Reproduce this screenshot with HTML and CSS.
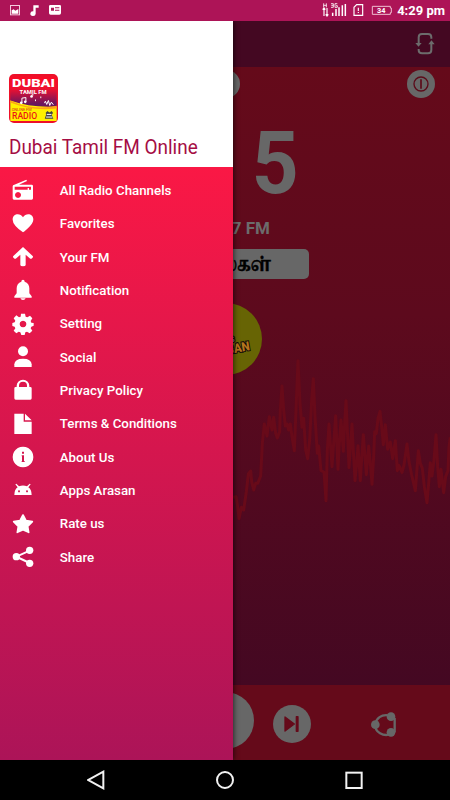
FILE: index.html
```html
<!DOCTYPE html>
<html lang="en">
<head>
<meta charset="utf-8">
<title>Dubai Tamil FM Online</title>
<link rel="stylesheet" href="styles.css">
</head>
<body>
<div class="phone">
  <header class="status">
    <svg class="status-left" viewBox="0 0 156 42">
      <rect x="1.5" y="7.500" width="27" height="28" fill="none" stroke="#f4cddd" stroke-width="3"/>
      <path d="M5 32v-10l6-3 5 4 9-5v14z" fill="#fff"/>
      <path d="M70 7h16v7h-9v18a8 7 0 1 1-7-7z" fill="#fff"/>
      <path fill-rule="evenodd" d="M121 6h28q4 0 4 4v20q0 5-5 5h-26q-5 0-5-5V10q0-4 4-4zM123 14v9h9v-9zM135 13v3h13v-3zM135 20v3h13v-3z" fill="#fff"/>
    </svg>
    <div class="status-right">
      <svg class="signal" viewBox="0 0 213 42" fill="none" stroke="#fff">
        <path d="M6 39V16M2 20l4-5 4 5M15 15v23M11 34l4 5 4-5" stroke-width="3.500"/>
        <path d="M5 1v12M13 1v12M5 7h8M27 2h7v11h-7M28 7h6M46 2h-7v11h7V8h-4" stroke-width="2.500"/>
        <path d="M32 39V29M42 39V18M51 39V13M61 39V7M70 39V3" stroke-width="4.500"/>
        <path d="M104 5h18v32H96V13z" stroke-width="3.500"/><path d="M109 14v10M109 27v3" stroke-width="3.500"/>
        <path d="M151 10h54v5h3v14h-3v5h-54z" stroke="#f0bfd2" stroke-width="3"/>
        <text class="battery" x="178" y="31">34</text>
      </svg>
      <span class="clock">4:29 pm</span>
    </div>
  </header>

  <div class="screen">
    <main class="app">
      <div class="toolbar">
        <svg class="refresh" viewBox="0 0 60 70" fill="none" stroke="#6c6c6c" stroke-width="6">
          <path d="M11 34V16q0-10 10-10h18q10 0 10 10v4M49 32v22q0 10-10 10H21q-10 0-10-9v-4"/>
          <path d="M1 33h19l-9.500 11zM40 37h19l-9.500-12z" fill="#6c6c6c" stroke="none"/>
        </svg>
      </div>
      <section class="player">
        <div class="controls">
          <span class="round"></span>
          <svg class="power" viewBox="0 0 84 84"><circle cx="42" cy="42" r="42" fill="#676767"/><circle cx="42" cy="42" r="21" fill="none" stroke="#5c0a19" stroke-width="4"/><path d="M42 28v28" stroke="#5c0a19" stroke-width="5"/></svg>
        </div>
        <div class="count"><span>5</span></div>
        <div class="freq">7 FM</div>
        <div class="category" lang="ta"><span>பாடல்கள்</span></div>
        <svg class="badge" viewBox="0 0 216 216">
          <circle cx="108" cy="108" r="108" fill="#676404"/>
          <g transform="rotate(-10 130 136)"><text x="174" y="117" text-anchor="end" class="badge-top" transform="translate(-36 0)">APPS</text><text x="179" y="150" text-anchor="end" class="badge-name" textLength="140" lengthAdjust="spacingAndGlyphs">ARASAN</text></g>
        </svg>
        <svg class="wave" viewBox="24 0 651 540"><path d="M24 442L33 440 38 470 42 506 49 472 56 480 64 425 70 372 77 363 80 395 86 420 92 400 98 400 107 378 112 280 118 222 126 258 133 200 141 240 146 202 152 250 157 264 164 245 166 180 171 108 176 180 181 228 186 222 191 240 196 222 201 260 208 302 213 180 219 32 225 160 231 232 236 205 242 300 248 326 254 270 260 150 265 86 270 200 277 310 281 288 288 362 297 366 303 452 307 300 312 222 321 350 326 280 332 197 339 358 343 280 348 210 355 304 359 220 363 152 368 260 372 353 377 280 381 222 386 320 390 392 395 340 399 287 406 392 411 310 415 254 424 374 431 288 436 340 441 403 446 320 449 245 454 250 459 205 465 184 470 230 475 284 481 224 488 298 496 276 503 326 511 272 517 362 522 346 531 367 537 345 546 282 552 335 560 375 571 422 575 370 580 302 586 340 592 355 598 410 606 458 611 400 616 338 621 378 627 330 633 254 638 350 643 410 648 358 656 428 662 380 669 362 672 290 676 262"/></svg>
      </section>
      <footer class="transport">
        <span class="play"></span>
        <svg class="next" viewBox="0 0 114 114"><circle cx="57" cy="57" r="57" fill="#676767"/><path d="M36 36l28 21-28 21zM70 35h5v44h-5z" fill="#650a1a" stroke="#650a1a" stroke-width="4" stroke-linejoin="round"/></svg>
        <svg class="circle-share" viewBox="0 0 78 78" fill="#676767"><path d="M57 11C30 5 15 20 13 37c-3 23 25 38 46 29M71 18v43" fill="none" stroke="#676767" stroke-width="7"/><circle cx="60" cy="14" r="13"/><circle cx="13" cy="38" r="13"/><circle cx="60" cy="61" r="13"/></svg>
      </footer>
    </main>

    <aside class="drawer">
      <div class="brand">
        <svg class="logo" viewBox="0 0 148 148">
          <defs><linearGradient id="sky" x1="0" y1="0" x2="0" y2="1"><stop offset="0" stop-color="#fb0b25"/><stop offset=".35" stop-color="#ee1030"/><stop offset=".8" stop-color="#69165e"/></linearGradient></defs>
          <rect width="148" height="148" rx="15" fill="#ee1029"/>
          <path d="M4 10h140v100H4z" fill="url(#sky)"/>
          <path d="M4 80q65 23 140 18v44H4z" fill="#fff000"/>
          <path d="M4 80q65 32 140 16v8Q70 113 4 86z" fill="#ffa418"/>
          <text x="74" y="38" textLength="130" lengthAdjust="spacingAndGlyphs" class="logo-city">DUBAI</text>
          <text x="73" y="60" textLength="82" lengthAdjust="spacingAndGlyphs" class="logo-fm">TAMIL FM</text>
          <path d="M39 87V73l12-2v13M69 68v-5h5M80 82v-5M96 73v-5M107 88l3-6 4 10 5-12 4 15 5-10 6 8" fill="none" stroke="#fff" stroke-width="3"/>
          <circle cx="37" cy="87" r="4" fill="#fff"/><circle cx="49" cy="84" r="4" fill="#fff"/><circle cx="68" cy="68" r="4" fill="#fff"/>
          <text x="8" y="113" textLength="60" lengthAdjust="spacingAndGlyphs" class="logo-online">ONLINE FM</text>
          <text x="9" y="137" textLength="76" lengthAdjust="spacingAndGlyphs" class="logo-radio">RADIO</text>
          <path d="M111 117l5-5 6 4 7-4 4 6-4 5 5 12h-26l4-12z" fill="#444"/><path d="M114 122h14M112 130h19" stroke="#fff" stroke-width="3"/>
        </svg>
        <h1>Dubai Tamil FM Online</h1>
      </div>
      <nav class="menu">
        <a class="item"><svg viewBox="0 0 66 66"><path fill-rule="evenodd" d="M7 17L43 2l2 4-24 11h38q4 0 4 4v37q0 4-4 4H6q-4 0-4-4V22q0-4 5-5zM8 23v9h39v-5h4v5h6v-9zM18 39a9 9 0 1 0 .1 0z"/></svg>All Radio Channels</a>
        <a class="item"><svg viewBox="0 0 66 66"><path d="M33 58Q2 36 2 20C2 1 25-1 33 13 41-1 64 1 64 20 64 36 33 58 33 58z"/></svg>Favorites</a>
        <a class="item"><svg viewBox="0 0 66 66"><path d="M33 3l29 27q3 3-2 7-3 3-7 0L41 26v31q0 4-8 4t-8-4V26L13 37q-4 3-7 0-5-4-2-7z"/></svg>Your FM</a>
        <a class="item"><svg viewBox="0 0 66 66"><path d="M33 2q5 0 5 6 14 5 14 20v15l7 9v4H7v-4l7-9V28Q14 13 28 8q0-6 5-6zM25 58h16q-2 5-8 5t-8-5z"/></svg>Notification</a>
        <a class="item"><svg viewBox="0 0 66 66"><path fill-rule="evenodd" d="M27 2h12l2 9 5 2 8-5 7 8-5 8 2 5 7 1v8l-7 3-2 5 5 7-8 8-8-5-5 2-2 8H28l-3-8-5-2-7 5-8-8 5-7-2-5-7-2v-9l7-2 2-5-5-7 8-9 8 6 5-2zM33 23a10 10 0 1 0 .1 0z"/></svg>Setting</a>
        <a class="item"><svg viewBox="0 0 66 66"><circle cx="33" cy="16" r="15"/><path d="M7 63V55Q8 38 33 38t26 17v8z"/></svg>Social</a>
        <a class="item"><svg viewBox="0 0 66 66"><path fill-rule="evenodd" d="M14 24v-4a19 18 0 0 1 38 0v4h3q4 0 4 4v30q0 4-4 4H11q-4 0-4-4V28q0-4 4-4zM21 24h24v-4a12 12 0 0 0-24 0z"/></svg>Privacy Policy</a>
        <a class="item"><svg viewBox="0 0 66 66"><path d="M7 2h28v24h24v37H7zM39 2l20 20H39z"/></svg>Terms &amp; Conditions</a>
        <a class="item"><svg viewBox="0 0 66 66"><path fill-rule="evenodd" d="M33 2a31 31 0 1 0 .1 0zM30 17h6v6h-6zM29 28h7v17h2v3h-9v-3h1V31h-1z"/></svg>About Us</a>
        <a class="item"><svg viewBox="0 0 66 66"><path fill-rule="evenodd" d="M10 16l3-2 8 8q12-5 24 0l8-8 3 2-7 9q10 7 10 23H7q0-16 10-23zM21 34a3 3 0 1 0 .1 0zM45 34a3 3 0 1 0 .1 0z"/></svg>Apps Arasan</a>
        <a class="item"><svg viewBox="0 0 66 66"><path d="M33 6l9 17 19 3-14 14 3 18-17-8-17 8 3-18L5 26l19-3z" stroke="#fff" stroke-width="5" stroke-linejoin="round"/></svg>Rate us</a>
        <a class="item"><svg viewBox="0 0 66 66"><path d="M53 14L13 32l40 19" fill="none" stroke="#fff" stroke-width="6"/><circle cx="53" cy="13" r="11"/><circle cx="13" cy="32" r="11"/><circle cx="53" cy="52" r="11"/></svg>Share</a>
      </nav>
    </aside>
  </div>

  <footer class="system">
    <svg viewBox="0 0 54 60"><path d="M49 5v50L4 30z"/></svg>
    <svg viewBox="0 0 54 60"><circle cx="27" cy="30" r="24"/></svg>
    <svg viewBox="0 0 54 60"><rect x="4" y="8" width="46" height="46"/></svg>
  </footer>
</div>
</body>
</html>
```

FILE: styles.css
```css
* { box-sizing: border-box; }
body { margin: 0; font-family: Roboto, "Liberation Sans", sans-serif; }
svg { display: block; flex: none; }
.phone { width: 450px; height: 800px; display: flex; flex-direction: column; overflow: hidden; }

.status { height: 21px; flex: none; background: #ad1457; display: flex; justify-content: space-between; padding: 0 5px 0 10px; }
.status-left { width: 52px; height: 14px; margin-top: 3px; }
.status-right { display: flex; }
.signal { width: 71px; height: 14px; margin: 3px 4px 0 0; }
.battery { font-size: 22px; font-weight: 700; fill: #fff; stroke: none; text-anchor: middle; }
.clock { color: #fff; font-size: 13px; font-weight: 700; line-height: 21px; white-space: nowrap; }

.screen { position: relative; height: 739px; flex: none; }
.app { height: 100%; display: flex; flex-direction: column; }
.toolbar { height: 46px; flex: none; background: #440822; display: flex; justify-content: flex-end; padding: 11px 15px 0 0; }
.refresh { width: 20px; height: 23.300px; }
.player { height: 618px; flex: none; display: flex; flex-direction: column; background: linear-gradient(#650a1a, #5d0a1d 40%, #440822); }
.controls { height: 34px; padding: 3px 15px 0 212px; display: flex; justify-content: space-between; }
.round, .power { width: 28px; height: 28px; }
.round { border-radius: 50%; background: #676767; }
.count { height: 115px; padding: 11px 0 0 250px; color: #676767; font-size: 88px; font-weight: 700; line-height: 102px; }
.count span { display: inline-block; transform: scaleX(.93); }
.freq { height: 33px; padding-right: 180px; color: #6c6c6c; font-size: 17px; font-weight: 700; line-height: 25px; text-align: right; white-space: pre; }
.category { width: 167px; height: 30px; margin-left: 142px; padding-right: 38px; border-radius: 5px; background: #676767; color: #000; font-family: "Noto Serif Tamil", "Noto Sans Tamil", "Lohit Tamil", serif; font-size: 19px; font-weight: 700; line-height: 34px; text-align: right; white-space: nowrap; }
.category span { display: inline-block; transform: scaleX(.8); transform-origin: right; -webkit-text-stroke: .5px #000; }
.badge { width: 72px; height: 72px; margin: 24px 0 0 190px; }
.badge-top, .badge-name { font-weight: 900; fill: #b4751c; stroke: #140b09; stroke-width: 6px; paint-order: stroke; }
.badge-top { font-size: 24px; fill: #777; }
.badge-name { font-size: 38px; }
.wave { width: 217px; height: 180px; margin: -25px 0 0 233px; fill: none; stroke: #680a19; stroke-width: 9; stroke-linejoin: round; }
.transport { height: 75px; flex: none; display: flex; background: #650a1a; padding-left: 197px; }
.play { width: 57px; height: 57px; margin-top: 7px; border-radius: 50%; background: #676767; }
.next { width: 38px; height: 38px; margin: 20px 0 0 19px; }
.circle-share { width: 26px; height: 26px; margin: 27px 0 0 60px; }

.drawer { position: absolute; top: 0; left: 0; width: 233px; height: 739px; display: flex; flex-direction: column; box-shadow: 1px 0 5px rgba(0, 0, 0, .6); clip-path: inset(0 -8px 0 0); }
.brand { height: 146px; flex: none; padding: 53px 0 0 9px; background: #fff; }
.logo { width: 49px; height: 49px; }
.logo text { font-family: Roboto, sans-serif; }
.logo-city { font-size: 34px; font-weight: 900; fill: #fff; text-anchor: middle; }
.logo-fm { font-size: 17px; font-weight: 700; fill: #fff; text-anchor: middle; }
.logo-online { font-size: 12px; fill: #d52020; }
.logo-radio { font-size: 27px; font-weight: 500; fill: #ed1515; }
h1 { margin: 12px 0 0; color: #a50d44; font-size: 20px; font-weight: 400; line-height: 24px; white-space: nowrap; transform: scaleX(.947); transform-origin: left; }
.menu { flex: 1; padding-top: 6.700px; background: linear-gradient(#fa1845, #ac1458); }
.item { height: 33.350px; display: flex; align-items: center; gap: 25.500px; padding-left: 12.300px; color: #fff; font-size: 13.300px; font-weight: 500; white-space: nowrap; }
.item svg { width: 22px; height: 22px; fill: #fff; }

.system { height: 40px; flex: none; display: flex; justify-content: space-between; align-items: center; padding: 0 87px; background: #000; }
.system svg { width: 18px; height: 20px; fill: none; stroke: #f2f2f2; stroke-width: 6; }
```
